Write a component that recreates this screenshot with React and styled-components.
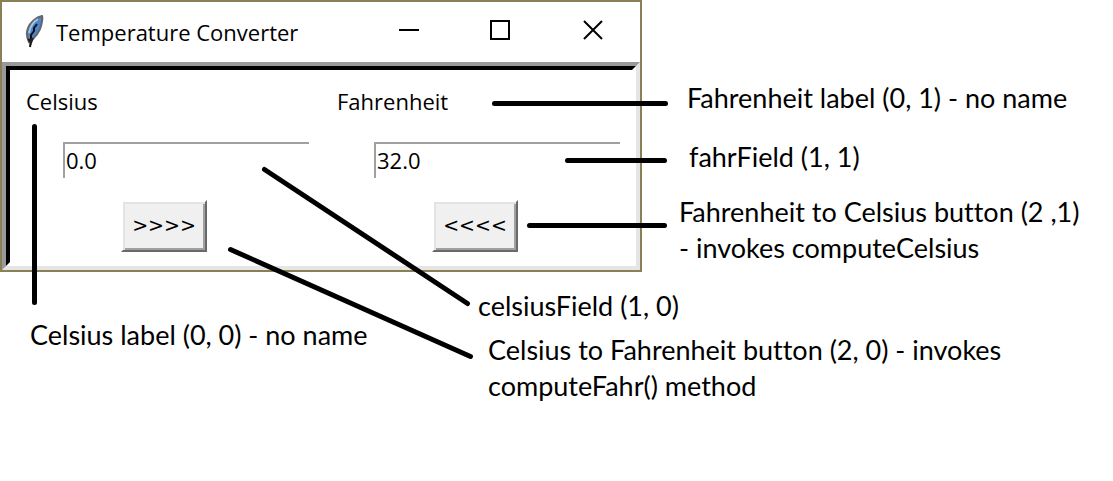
import React, { useState } from "react";
import styled, { createGlobalStyle } from "styled-components";

const GlobalStyle = createGlobalStyle`
  * { box-sizing: border-box; }
  body { margin: 0; background: #fff; color: #000; }
`;

const Page = styled.main`
  position: relative;
  display: grid;
  grid-template-columns: minmax(0, 642px) minmax(0, 1fr);
  align-items: start;
  font-family: Lato, Carlito, sans-serif;
  font-size: 27px;
  font-variant-ligatures: none;
  line-height: 36px;
`;

const Window = styled.section`
  border: 2px solid #8b7f54;
  background: #fff;
  font-family: "Open Sans", "Noto Sans", sans-serif;
`;

const TitleBar = styled.header`
  display: flex;
  align-items: center;
  height: 60px;
  padding: 0 36px 0 22px;
`;

const Title = styled.h1`
  flex: 1;
  margin: 0 0 0 12px;
  font-size: 22px;
  font-weight: 400;
  line-height: 32px;
  white-space: nowrap;
`;

const WindowControls = styled.div`
  display: flex;
  gap: 72px;
  padding-bottom: 4px;
`;

const ControlButton = styled.button`
  display: flex;
  width: 21px;
  height: 20px;
  padding: 0;
  border: 0;
  background: none;
`;

const OuterBevel = styled.div`
  border: 4px solid;
  border-color: #999 #e5e5e5 #e5e5e5 #999;
`;

const Form = styled.form`
  display: grid;
  grid-template-columns: 1fr 1fr;
  padding: 15px 0 10px;
  border: 4px solid;
  border-color: #000 #fff #fff #000;
`;

const FieldLabel = styled.label`
  margin: 0 0 25px 16px;
  font-size: 22px;
  line-height: 32px;
`;

const Field = styled.input`
  justify-self: end;
  width: 80%;
  max-width: 246px;
  height: 36px;
  margin: 0 12px 22px 0;
  padding: 0 1px 2px;
  border: 0 solid #a0a0a0;
  border-width: 2px 0 0 2px;
  border-radius: 0;
  outline: 0;
  background: #fff;
  color: #000;
  font-family: inherit;
  font-size: 22px;
`;

const ConvertButton = styled.button`
  justify-self: center;
  width: 86px;
  height: 52px;
  margin-right: 3px;
  padding: 0 0 2px;
  border: 2px solid;
  border-color: #fff #696969 #696969 #fff;
  background: #f0f0f0;
  box-shadow: inset 2px 2px #e3e3e3, inset -2px -2px #a0a0a0;
  color: #000;
  font-family: "DejaVu Sans", sans-serif;
  font-size: 19px;
`;

const SideNotes = styled.aside`
  padding: 80px 0 0 37px;
  white-space: nowrap;
`;

const LowerNotes = styled.section`
  grid-column: 1 / -1;
  display: grid;
  grid-template-columns: minmax(0, 448px) minmax(0, 1fr);
  padding-left: 30px;
`;

const NoteColumn = styled.div`
  padding-top: ${(p) => p.$top}px;
`;

const Note = styled.p`
  margin: 0 0 ${(p) => p.$gap || 0}px ${(p) => p.$indent || 0}px;
`;

const Pointers = styled.svg`
  position: absolute;
  top: 0;
  left: 0;
  overflow: visible;
  pointer-events: none;
`;

const Feather = () => (
  <svg width="20" height="34" viewBox="0 0 20 34" aria-hidden="true">
    <path d="M18 1C12 2 6 8 4 13C2 18 3 23 5 27C11 23 16 16 17 11C18 7 19 4 18 1Z" fill="#4a86cf" stroke="#666" strokeWidth="2" />
    <path d="M14 4C9 7 6 12 5 18" fill="none" stroke="#a9c4de" strokeWidth="2" />
    <path d="M13 9L10 13L10 16L7 20L7 25L6 32" fill="none" stroke="#111" strokeWidth="2" />
    <path d="M4 24L7 28L9 23" fill="#222" stroke="#222" strokeWidth="2" />
  </svg>
);

const toFahrenheit = (c) => (c * 9) / 5 + 32;
const toCelsius = (f) => ((f - 32) * 5) / 9;

export default function App() {
  const [celsius, setCelsius] = useState("0.0");
  const [fahrenheit, setFahrenheit] = useState("32.0");

  return (
    <>
      <GlobalStyle />
      <Page>
        <Window>
          <TitleBar>
            <Feather />
            <Title>Temperature Converter</Title>
            <WindowControls>
              <ControlButton type="button" aria-label="Minimize">
                <svg width="21" height="20" overflow="visible"><path d="M2 10H22" stroke="#000" strokeWidth="2" /></svg>
              </ControlButton>
              <ControlButton type="button" aria-label="Maximize">
                <svg width="21" height="20"><rect x="1" y="1" width="18" height="18" fill="none" stroke="#000" strokeWidth="2" /></svg>
              </ControlButton>
              <ControlButton type="button" aria-label="Close">
                <svg width="21" height="20"><path d="M1 1L19 19M19 1L1 19" stroke="#000" strokeWidth="2" /></svg>
              </ControlButton>
            </WindowControls>
          </TitleBar>
          <OuterBevel>
            <Form onSubmit={(e) => e.preventDefault()}>
              <FieldLabel htmlFor="celsius">Celsius</FieldLabel>
              <FieldLabel htmlFor="fahrenheit">Fahrenheit</FieldLabel>
              <Field id="celsius" value={celsius} onChange={(e) => setCelsius(e.target.value)} />
              <Field id="fahrenheit" value={fahrenheit} onChange={(e) => setFahrenheit(e.target.value)} />
              <ConvertButton type="button" onClick={() => setFahrenheit(toFahrenheit(Number(celsius)).toFixed(1))}>
                {">>>>"}
              </ConvertButton>
              <ConvertButton type="button" onClick={() => setCelsius(toCelsius(Number(fahrenheit)).toFixed(1))}>
                {"<<<<"}
              </ConvertButton>
            </Form>
          </OuterBevel>
        </Window>

        <SideNotes>
          <Note $indent={8} $gap={23}>Fahrenheit label (0, 1) - no name</Note>
          <Note $indent={10} $gap={19}>fahrField (1, 1)</Note>
          <Note>
            Fahrenheit to Celsius button (2 ,1)
            <br />- invokes computeCelsius
          </Note>
        </SideNotes>

        <LowerNotes>
          <NoteColumn $top={45}>
            <Note>Celsius label (0, 0) - no name</Note>
          </NoteColumn>
          <NoteColumn $top={16}>
            <Note $gap={8}>celsiusField (1, 0)</Note>
            <Note $indent={10}>
              Celsius to Fahrenheit button (2, 0) - invokes
              <br />
              computeFahr() method
            </Note>
          </NoteColumn>
        </LowerNotes>

        <Pointers width="700" height="400" aria-hidden="true">
          <g stroke="#000" strokeWidth="5" strokeLinecap="round">
            <path d="M494.5 103.5H665.5" />
            <path d="M567.5 160.5H664.5" />
            <path d="M529.5 225.5H664.5" />
            <path d="M34.5 126.5V302.5" />
            <path d="M264.5 169.5L467.5 303.5" />
            <path d="M230.5 249.5L470.5 356.5" />
          </g>
        </Pointers>
      </Page>
    </>
  );
}
